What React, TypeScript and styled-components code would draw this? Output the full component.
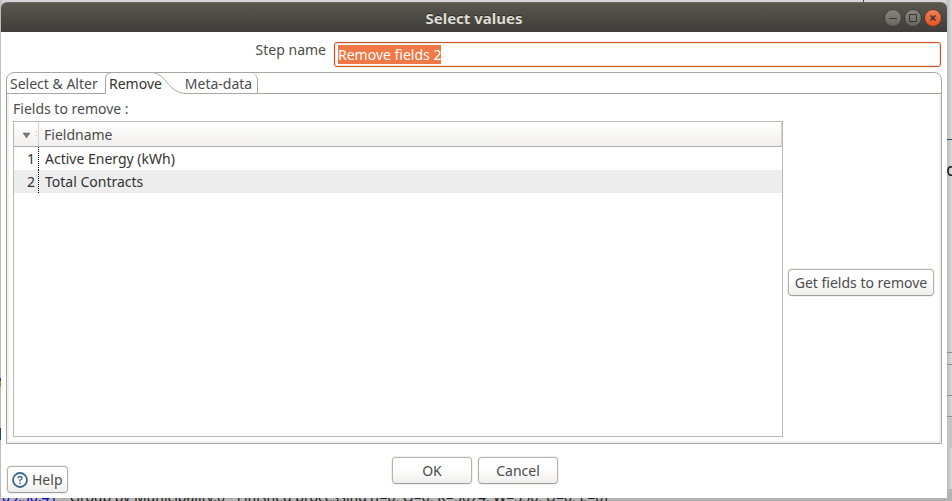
import React from "react";
import styled, { createGlobalStyle, css } from "styled-components";

const Global = createGlobalStyle`
  * { box-sizing: border-box; }
  html, body, #root { height: 100%; }
  body { margin: 0; overflow: hidden; }
  body, button, input { font: 14px/20px "Noto Sans", "Open Sans", sans-serif; color: #4c4c4c; }
`;

const Desktop = styled.div`
  position: relative;
  display: flex;
  height: 100vh;
  padding: 2px 5px 3px 1px;
  background: linear-gradient(90deg, #b9b9b9 0, #d5d5d7 3px, #d5d5d7 calc(100% - 6px), #bcbcbd calc(100% - 5px), #dadada 100%);
  overflow: hidden;
`;
const Backdrop = styled.svg`
  position: absolute;
  top: 0;
  right: 0;
  width: 90px;
  height: 501px;
`;
const LeftEdge = styled.svg`
  position: absolute;
  top: 0;
  left: 0;
  width: 2px;
  height: 501px;
`;
const LogLine = styled.div`
  position: absolute;
  left: 0;
  right: 0;
  bottom: -4px;
  padding-left: 2px;
  display: flex;
  gap: 4px;
  font-size: 14px;
  line-height: 16px;
  color: #1c1c1c;
  white-space: pre;
  background: #b4b4b4;
`;
const LogTime = styled.span`
  color: #0000c0;
`;

const Dialog = styled.main`
  position: relative;
  flex: 1;
  display: flex;
  flex-direction: column;
  background: #fff;
  border-radius: 6px 6px 0 0;
`;
const TitleBar = styled.header`
  display: grid;
  grid-template-columns: 1fr auto 1fr;
  align-items: center;
  height: 30px;
  padding: 0 5px;
  border-radius: 6px 6px 0 0;
  border-top: 1px solid #6b6962;
  background: linear-gradient(#5a574f, #3e3d39);
`;
const Title = styled.h1`
  grid-column: 2;
  margin: 0;
  font-size: 15px;
  line-height: 20px;
  font-weight: 700;
  color: #dfdbd2;
  text-shadow: 0 -1px 0 #2b2a27;
`;
const WindowControls = styled.div`
  display: flex;
  justify-content: flex-end;
  gap: 2px;
`;
const WindowButton = styled.button<{ $close?: boolean }>`
  width: 18px;
  height: 18px;
  padding: 0;
  border: 0;
  border-radius: 50%;
  background: ${(p) => (p.$close ? "linear-gradient(#f5835c, #e2501f)" : "linear-gradient(#8a8881, #66645e)")};
  box-shadow: inset 0 0 0 1px #35342f;
  svg { display: block; }
`;

const StepRow = styled.div`
  display: grid;
  grid-template-columns: 325px 1fr;
  column-gap: 8px;
  padding: 10px 6px 0 0;
`;
const StepLabel = styled.label`
  height: 20px;
  margin-top: -2px;
  text-align: right;
`;
const StepInput = styled.input`
  width: 100%;
  height: 25px;
  padding: 0 3px;
  border: 1px solid #cf5527;
  border-radius: 3px;
  outline: 0;
  background: #fff;
  box-shadow: inset 0 0 0 1px #fae3da, 0 0 0 1px #f2f1f0;
  &::selection { background: #f07746; color: #fff; }
`;

const TabFolder = styled.section`
  flex: 1;
  display: flex;
  flex-direction: column;
  margin: 5px 5px 0;
  border: 1px solid #a8a6a2;
  border-radius: 8px 8px 0 0;
`;
const TabStrip = styled.div`
  display: flex;
  height: 21px;
  border-bottom: 1px solid #a8a6a2;
`;
const Tab = styled.button<{ $kind: "first" | "active" | "last" }>`
  height: 20px;
  padding: 0 3px;
  border: 0;
  background: none;
  line-height: 22px;
  text-align: left;
  white-space: nowrap;
  ${(p) => p.$kind === "first" && css`width: 99px;`}
  ${(p) => p.$kind === "active" && css`
    position: relative;
    width: 74px;
    color: #333;
  `}
  ${(p) => p.$kind === "last" && css`
    width: 78px;
    text-align: center;
    border-right: 1px solid #a8a6a2;
    border-top-right-radius: 7px;
  `}
`;
const TabShape = styled.svg`
  position: absolute;
  left: -1px;
  top: -1px;
`;
const TabText = styled.span`
  position: relative;
`;
const TabBody = styled.div`
  flex: 1;
  display: flex;
  flex-direction: column;
  padding: 5px 6px 6px;
  box-shadow: inset 2px -2px 0 #f0f0f0, inset -2px 0 0 #f0f0f0;
`;
const Caption = styled.h2`
  margin: 0;
  font-size: 14px;
  line-height: 20px;
  font-weight: 400;
`;
const BodyColumns = styled.div`
  flex: 1;
  display: flex;
  gap: 5px;
  margin-top: 2px;
`;
const TableFrame = styled.div`
  flex: 1;
  border: 1px solid #bab8b3;
`;
const FieldTable = styled.table`
  width: 100%;
  border-collapse: separate;
  border-spacing: 0;
  table-layout: fixed;
  color: #333;
`;
const HeadCell = styled.th<{ $index?: boolean }>`
  width: ${(p) => (p.$index ? "25px" : "auto")};
  height: 25px;
  padding: ${(p) => (p.$index ? "2px 0 0" : "2px 5px 0")};
  text-align: left;
  font-weight: 400;
  color: #4c4c4c;
  border-right: 1px solid #d6d4d0;
  border-bottom: 1px solid #b0ada5;
  background: linear-gradient(#fff, #f0efee);
  svg { display: block; margin-left: 8px; }
`;
const Row = styled.tr`
  &:nth-child(even) { background: #ededed; }
`;
const IndexCell = styled.td`
  height: 23px;
  padding: 0 3px 0 0;
  text-align: right;
  border-right: 1px dotted #000;
`;
const Cell = styled.td`
  padding: 0 6px;
`;

const Button = styled.button<{ $width?: number }>`
  display: flex;
  align-items: center;
  justify-content: center;
  gap: 4px;
  height: 27px;
  min-width: ${(p) => (p.$width ? p.$width + "px" : "auto")};
  padding: 0 4px;
  border: 1px solid #b5b2ad;
  border-bottom-color: #a09d98;
  border-radius: 4px;
  background: linear-gradient(#fff 40%, #efeeed);
  box-shadow: 0 0 0 1px #f2f1f0;
  white-space: nowrap;
`;
const SideActions = styled.div`
  display: flex;
  align-items: center;
  padding: 7px 1px 0 0;
`;
const Footer = styled.footer`
  display: grid;
  grid-template-columns: 1fr auto 1fr;
  height: 54px;
  padding: 13px 4px 5px 6px;
`;
const HelpSlot = styled.div`
  display: flex;
  align-items: flex-end;
`;
const MainActions = styled.div`
  display: flex;
  gap: 6px;
`;

const fields = ["Active Energy (kWh)", "Total Contracts"];

export default function App() {
  const input = React.useRef<HTMLInputElement>(null);
  React.useEffect(() => {
    input.current?.focus();
    input.current?.select();
  }, []);
  return (
    <>
      <Global />
      <Desktop>
        <Backdrop viewBox="0 0 90 501" aria-hidden="true">
          <path d="M1.500 0v3M80 139.500h10" stroke="#34495a" />
          <path d="M85 352.500h5M85 364.500h5M85 395.500h5M85 416.500h5" stroke="#8b8984" />
          <path d="M85 418h5v30h-5z" fill="#c4c4c4" />
          <path d="M90 167q-4-1-4 4t4 4" fill="none" stroke="#111" strokeWidth="1.500" />
        </Backdrop>
        <LeftEdge viewBox="0 0 2 501" aria-hidden="true">
          <path d="M0 378h1v3H0zM0 428h1v12H0z" fill="#284b69" />
          <path d="M0 381h1v6H0z" fill="#b87840" />
        </LeftEdge>
        <LogLine>
          <LogTime>09:30:41</LogTime>
          <span>- Group by Municipality.0 - Finished processing (I=0, O=0, R=5074, W=336, U=0, E=0)</span>
        </LogLine>
        <Dialog>
          <TitleBar>
            <Title>Select values</Title>
            <WindowControls>
              <WindowButton aria-label="Minimize">
                <svg width="18" height="18"><path d="M5 9.500h8" stroke="#35342f" /></svg>
              </WindowButton>
              <WindowButton aria-label="Maximize">
                <svg width="18" height="18"><path d="M5.500 5.500h7v7h-7z" fill="none" stroke="#35342f" /></svg>
              </WindowButton>
              <WindowButton aria-label="Close" $close>
                <svg width="18" height="18"><path d="M6.500 6.500l5 5M11.500 6.500l-5 5" stroke="#35342f" strokeWidth="1.500" /></svg>
              </WindowButton>
            </WindowControls>
          </TitleBar>
          <StepRow>
            <StepLabel htmlFor="step-name">Step name</StepLabel>
            <StepInput id="step-name" ref={input} defaultValue="Remove fields 2" />
          </StepRow>
          <TabFolder>
            <TabStrip role="tablist">
              <Tab role="tab" $kind="first">Select &amp; Alter</Tab>
              <Tab role="tab" aria-selected="true" $kind="active">
                <TabShape width="88" height="23" aria-hidden="true">
                  <path d="M.5 22V7Q.5.5 8 .5H46C62 .5 62 21.500 82 21.500V22.500H.5z" fill="#fff" />
                  <path d="M.5 22V7Q.5.5 8 .5H46C62 .5 62 21.500 82 21.500" fill="none" stroke="#a8a6a2" />
                </TabShape>
                <TabText>Remove</TabText>
              </Tab>
              <Tab role="tab" $kind="last"><TabText>Meta-data</TabText></Tab>
            </TabStrip>
            <TabBody>
              <Caption>Fields to remove :</Caption>
              <BodyColumns>
                <TableFrame>
                  <FieldTable>
                    <thead>
                      <tr>
                        <HeadCell $index aria-label="Row number">
                          <svg width="16" height="8" aria-hidden="true">
                            <path d="M1 2h7l-3.500 5z" fill="#777" stroke="#666" strokeWidth="0.500" />
                            <path d="M14 0h1v1h-1zM14 4h1v1h-1z" fill="#f6b26b" />
                          </svg>
                        </HeadCell>
                        <HeadCell>Fieldname</HeadCell>
                      </tr>
                    </thead>
                    <tbody>
                      {fields.map((name, i) => (
                        <Row key={name}>
                          <IndexCell>{i + 1}</IndexCell>
                          <Cell>{name}</Cell>
                        </Row>
                      ))}
                    </tbody>
                  </FieldTable>
                </TableFrame>
                <SideActions>
                  <Button $width={146}>Get fields to remove</Button>
                </SideActions>
              </BodyColumns>
            </TabBody>
          </TabFolder>
          <Footer>
            <HelpSlot>
              <Button>
                <svg width="16" height="16" viewBox="0 0 16 16" fill="none" stroke="#41678a" aria-hidden="true">
                  <circle cx="8" cy="8" r="7" strokeWidth="1.800" />
                  <path d="M6 6.300Q6 4.500 8 4.500T10 6.200Q10 7.200 8 8.200V9.500M8 10.500v1.500" strokeWidth="1.400" />
                </svg>
                Help
              </Button>
            </HelpSlot>
            <MainActions>
              <Button $width={80}>OK</Button>
              <Button $width={80}>Cancel</Button>
            </MainActions>
          </Footer>
        </Dialog>
      </Desktop>
    </>
  );
}
